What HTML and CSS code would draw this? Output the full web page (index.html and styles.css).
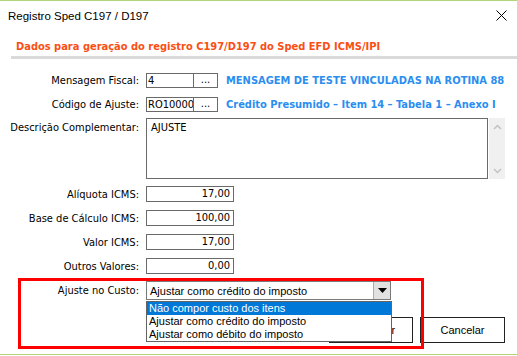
FILE: index.html
```html
<!DOCTYPE html>
<html lang="pt-BR">
<head>
    <meta charset="UTF-8">
    <meta name="viewport" content="width=device-width, initial-scale=1.0">
    <title>Registro Sped C197 / D197</title>
    <link rel="stylesheet" href="styles.css">
</head>
<body>

<div class="window">
    <div class="titlebar">
        <span class="title">Registro Sped C197 / D197</span>
        <svg class="close" width="11" height="11" viewBox="0 0 11 11">
            <path d="M0.5 0.5 L10.5 10.5 M10.5 0.5 L0.5 10.5" stroke="#000" stroke-width="1" fill="none"/>
        </svg>
    </div>

    <h2 class="section-title">Dados para geração do registro C197/D197 do Sped EFD ICMS/IPI</h2>
    <div class="rule"></div>

    <div class="form">
        <div class="row row-first">
            <label class="label">Mensagem Fiscal:</label>
            <div class="field code">4</div>
            <div class="lookup">...</div>
            <span class="desc">MENSAGEM DE TESTE VINCULADAS NA ROTINA 88</span>
        </div>
        <div class="row row-second">
            <label class="label">Código de Ajuste:</label>
            <div class="field code">RO10000</div>
            <div class="lookup">...</div>
            <span class="desc">Crédito Presumido – Item 14 – Tabela 1 – Anexo I</span>
        </div>
        <div class="row row-memo">
            <label class="label">Descrição Complementar:</label>
            <div class="field memo">AJUSTE</div>
            <div class="scrollbar">
                <svg width="9" height="6" viewBox="0 0 9 6"><path d="M1 5 L4.5 1.5 L8 5" stroke="#c2c2c2" stroke-width="1.5" fill="none"/></svg>
                <svg width="9" height="6" viewBox="0 0 9 6"><path d="M1 1 L4.5 4.5 L8 1" stroke="#c2c2c2" stroke-width="1.5" fill="none"/></svg>
            </div>
        </div>
        <div class="row row-num row-aliq">
            <label class="label">Alíquota ICMS:</label>
            <div class="field number">17,00</div>
        </div>
        <div class="row row-num">
            <label class="label">Base de Cálculo ICMS:</label>
            <div class="field number">100,00</div>
        </div>
        <div class="row row-num">
            <label class="label">Valor ICMS:</label>
            <div class="field number">17,00</div>
        </div>
        <div class="row row-num">
            <label class="label">Outros Valores:</label>
            <div class="field number">0,00</div>
        </div>
        <div class="row row-select">
            <label class="label">Ajuste no Custo:</label>
            <div class="combo">
                <span class="combo-text">Ajustar como crédito do imposto</span>
                <span class="combo-arrow">
                    <svg width="9" height="5" viewBox="0 0 9 5"><path d="M0 0 L9 0 L4.5 5 Z" fill="#000"/></svg>
                </span>
                <ul class="options">
                    <li class="selected">Não compor custo dos itens</li>
                    <li>Ajustar como crédito do imposto</li>
                    <li>Ajustar como débito do imposto</li>
                </ul>
            </div>
        </div>
        <div class="actions">
            <button class="btn">Confirmar</button>
            <button class="btn">Cancelar</button>
        </div>
    </div>

    <div class="highlight"></div>
</div>

</body>
</html>
```

FILE: styles.css
```css
* {
    box-sizing: border-box;
}
body {
    margin: 0;
    width: 517px;
    height: 356px;
    overflow: hidden;
    background-color: #fff;
    font-family: "DejaVu Sans Condensed", "DejaVu Sans", sans-serif;
    font-stretch: condensed;
    font-size: 11px;
    color: #000;
}
.window {
    position: relative;
    height: 355px;
    border-top: 1px solid #b3d57a;
    border-bottom: 1px solid #b3d57a;
}
.titlebar {
    display: flex;
    align-items: center;
    justify-content: space-between;
    height: 29px;
    padding: 0 10px 0 8px;
    font-family: "Liberation Sans", Arial, sans-serif;
    font-stretch: normal;
    font-size: 11.5px;
}
.section-title {
    margin: 10px 0 0 16px;
    font-size: 11px;
    line-height: 14px;
    font-weight: bold;
    color: #fa4f14;
}
.rule {
    height: 3px;
    margin: 2px 0 0 11px;
    background-color: #dadada;
}
.form {
    padding-right: 12px;
}
.row {
    display: flex;
    align-items: center;
    margin-top: 8px;
}
.row-first {
    margin-top: 14px;
}
.row-second {
    margin-top: 9px;
}
.row-memo {
    align-items: flex-start;
    margin-top: 6px;
}
.row-aliq {
    margin-top: 7px;
}
.row-select {
    margin-top: 7px;
}
.label {
    flex: none;
    width: 139px;
    margin-right: 7px;
    text-align: right;
    line-height: 15px;
}
.row-memo .label {
    padding-top: 2px;
}
.field {
    flex: none;
    height: 15px;
    border: 1px solid #6a6a6a;
    line-height: 13px;
    padding: 0 2px;
    white-space: nowrap;
    overflow: hidden;
}
.code {
    width: 48px;
    padding: 0 0 0 1px;
}
.lookup {
    flex: none;
    width: 24px;
    height: 15px;
    border: 1px solid #6a6a6a;
    border-left: none;
    text-align: center;
    line-height: 11px;
}
.desc {
    flex: 1;
    min-width: 0;
    margin-left: 8px;
    overflow: hidden;
    white-space: nowrap;
    font-weight: bold;
    color: #2a8ef0;
}
.memo {
    width: 342px;
    height: 61px;
    padding: 2px 4px;
    line-height: 14px;
}
.scrollbar {
    flex: none;
    display: flex;
    flex-direction: column;
    justify-content: space-between;
    align-items: center;
    width: 16px;
    height: 61px;
    margin-left: 1px;
    padding: 6px 0 5px;
    background-color: #f0f0f0;
}
.row-num .field {
    width: 88px;
    height: 16px;
    line-height: 14px;
    text-align: right;
    padding-right: 3px;
}
.combo {
    position: relative;
    display: flex;
    align-items: center;
    width: 245px;
    height: 19px;
    border: 1px solid #7a7a7a;
    font-family: "Liberation Sans", Arial, sans-serif;
    font-stretch: normal;
}
.combo-text {
    flex: 1;
    padding-left: 3px;
}
.combo-arrow {
    display: flex;
    align-items: center;
    justify-content: center;
    width: 17px;
    height: 17px;
    background-color: #e1e1e1;
    border-left: 1px solid #adadad;
}
.options {
    position: absolute;
    top: 19px;
    left: -1px;
    z-index: 2;
    width: 246px;
    margin: 0;
    padding: 0;
    list-style: none;
    background-color: #fff;
    border: 1px solid #646464;
}
.options li {
    height: 13px;
    line-height: 13px;
    padding-left: 2px;
    white-space: nowrap;
}
.options .selected {
    background-color: #0078d7;
    color: #fff;
}
.actions {
    display: flex;
    justify-content: flex-end;
    gap: 7px;
    margin-top: 17px;
}
.btn {
    width: 85px;
    height: 26px;
    padding: 0;
    background-color: #fff;
    border: 1px solid #222;
    font-family: "Liberation Sans", Arial, sans-serif;
    font-size: 11px;
    color: #000;
}
.btn:first-child {
    width: 84px;
}
.highlight {
    position: absolute;
    left: 18px;
    top: 277px;
    z-index: 3;
    width: 406px;
    height: 71px;
    border: 3px solid #ff0000;
}
```
